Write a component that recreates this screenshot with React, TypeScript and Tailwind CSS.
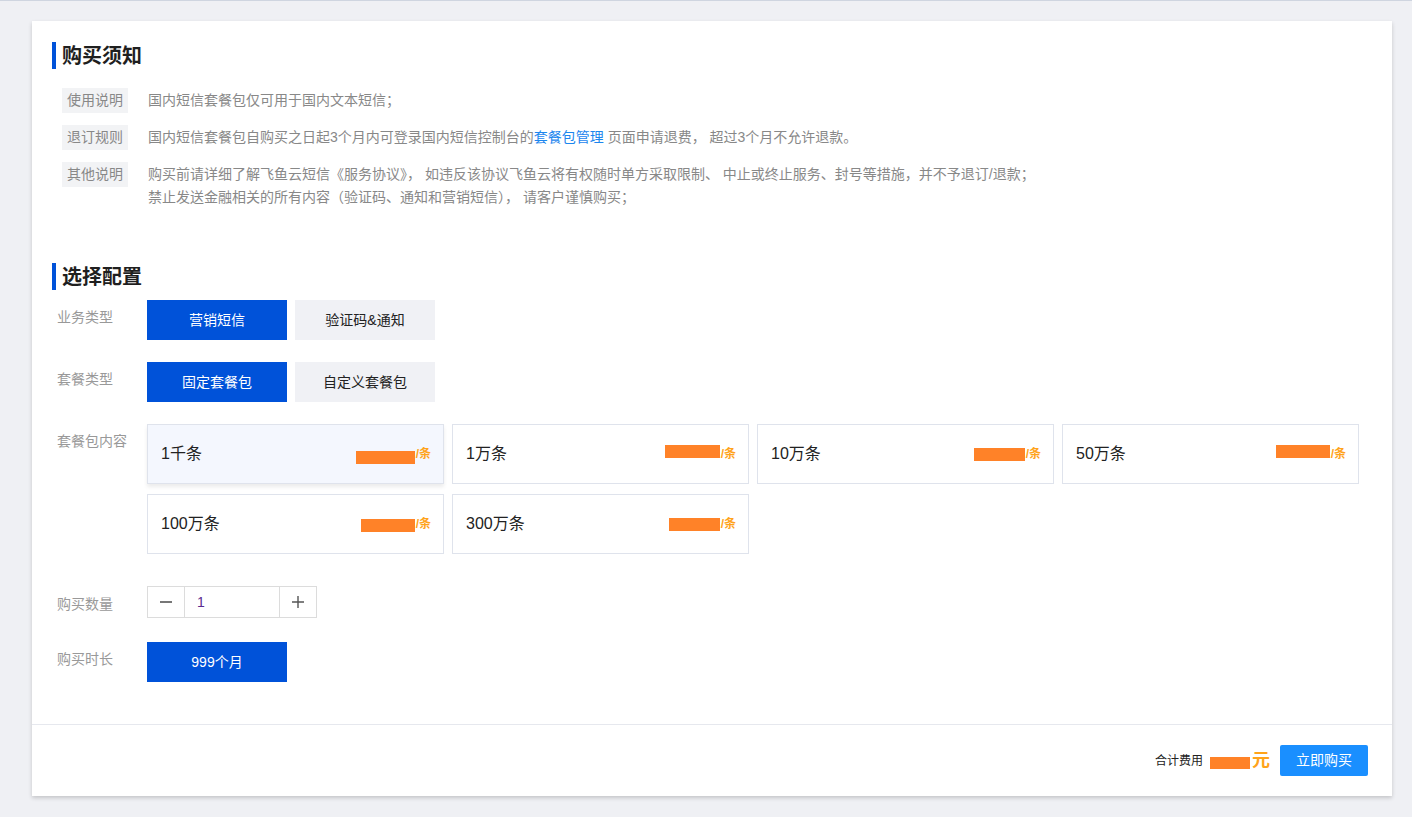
import { useState } from 'react';

const FONT = { fontFamily: '"Liberation Sans", "Noto Sans CJK SC", sans-serif' };

const notes = [
  { tag: '使用说明', lines: [<>国内短信套餐包仅可用于国内文本短信；</>] },
  {
    tag: '退订规则',
    lines: [
      <>
        国内短信套餐包自购买之日起3个月内可登录国内短信控制台的
        <span className="text-[#1c86ee]">套餐包管理</span> 页面申请退费， 超过3个月不允许退款。
      </>,
    ],
  },
  {
    tag: '其他说明',
    lines: [
      <>购买前请详细了解飞鱼云短信《服务协议》， 如违反该协议飞鱼云将有权随时单方采取限制、 中止或终止服务、封号等措施，并不予退订/退款；</>,
      <>禁止发送金融相关的所有内容（验证码、通知和营销短信）， 请客户谨慎购买；</>,
    ],
  },
];

// redacted prices: orange blocks of varying width / offset
const packages = [
  { name: '1千条', mask: 'w-[59px] mt-[6px]' },
  { name: '1万条', mask: 'w-[55px] -mt-[5px]' },
  { name: '10万条', mask: 'w-[51px] mt-[0px]' },
  { name: '50万条', mask: 'w-[54px] -mt-[5px]' },
  { name: '100万条', mask: 'w-[54px] mt-[2px]' },
  { name: '300万条', mask: 'w-[51px] mt-[0px]' },
];

function SectionTitle({ children }: { children: string }) {
  return (
    <div className="flex h-[27px] items-center border-l-4 border-[#0052d9] pl-[6px]">
      <span className="text-[20px] font-bold leading-none text-[#1f1f1f]">{children}</span>
    </div>
  );
}

function Option({ active, children, onClick }: { active?: boolean; children: string; onClick?: () => void }) {
  return (
    <button
      onClick={onClick}
      className={
        active
          ? 'h-[40px] w-[140px] bg-[#0052d9] text-[14px] text-white'
          : 'h-[40px] w-[140px] bg-[#f0f1f5] text-[14px] text-[#222]'
      }
    >
      {children}
    </button>
  );
}

function Row({ label, children, className = '' }: { label: string; children: React.ReactNode; className?: string }) {
  return (
    <div className={'flex items-start ' + className}>
      <div className="w-[90px] shrink-0 pt-[7px] text-[14px] leading-[20px] text-[#999]">{label}</div>
      <div>{children}</div>
    </div>
  );
}

export default function App() {
  const [biz, setBiz] = useState(0);
  const [kind, setKind] = useState(0);
  const [pkg, setPkg] = useState(0);
  const [qty, setQty] = useState(1);

  return (
    <div style={FONT} className="min-h-[817px] border-t border-[#cfd5e0] bg-[#eff0f4] pt-[20px]">
      <div className="ml-[32px] w-[1360px] bg-white shadow-[0_2px_4px_rgba(0,0,0,0.18)]">
        <div className="px-[20px] pt-[21px]">
          <SectionTitle>购买须知</SectionTitle>

          <div className="mt-[19px] ml-[10px] flex flex-col gap-[12px]">
            {notes.map((n) => (
              <div key={n.tag} className="flex items-start">
                <span className="h-[25px] shrink-0 bg-[#f2f3f5] px-[5px] text-[14px] leading-[25px] text-[#888]">
                  {n.tag}
                </span>
                <div className="ml-[20px] pt-[1px] text-[14px] leading-[23px] text-[#888]">
                  {n.lines.map((l, i) => (
                    <div key={i}>{l}</div>
                  ))}
                </div>
              </div>
            ))}
          </div>

          <div className="mt-[54px]">
            <SectionTitle>选择配置</SectionTitle>
          </div>

          <div className="ml-[5px] mt-[10px] flex flex-col">
            <Row label="业务类型">
              <div className="flex gap-[8px]">
                <Option active={biz === 0} onClick={() => setBiz(0)}>营销短信</Option>
                <Option active={biz === 1} onClick={() => setBiz(1)}>验证码&amp;通知</Option>
              </div>
            </Row>

            <Row label="套餐类型" className="mt-[22px]">
              <div className="flex gap-[8px]">
                <Option active={kind === 0} onClick={() => setKind(0)}>固定套餐包</Option>
                <Option active={kind === 1} onClick={() => setKind(1)}>自定义套餐包</Option>
              </div>
            </Row>

            <Row label="套餐包内容" className="mt-[22px]">
              <div className="grid w-[1212px] grid-cols-4 gap-x-[8px] gap-y-[10px]">
                {packages.map((p, i) => (
                  <div
                    key={p.name}
                    onClick={() => setPkg(i)}
                    className={
                      pkg === i
                        ? 'flex h-[60px] items-center justify-between border border-[#dfe3ec] bg-[#f4f7fe] pl-[13px] pr-[12px] shadow-[0_3px_4px_rgba(0,0,0,0.08)]'
                        : 'flex h-[60px] items-center justify-between border border-[#dfe3ec] bg-white pl-[13px] pr-[12px]'
                    }
                  >
                    <span className="text-[16px] text-[#222]">{p.name}</span>
                    <span className="flex items-center text-[12px] font-bold text-[#ffa31a]">
                      <span className={'h-[13px] bg-[#ff8228] ' + p.mask} />
                      <span className="ml-[1px]">/条</span>
                    </span>
                  </div>
                ))}
              </div>
            </Row>

            <Row label="购买数量" className="mt-[33px]">
              <div className="-mt-[1px] flex h-[32px] w-[170px] border border-[#dcdcdc]">
                <button
                  onClick={() => setQty(Math.max(1, qty - 1))}
                  className="flex w-[37px] items-center justify-center border-r border-[#dcdcdc]"
                >
                  <svg width="14" height="14" viewBox="0 0 14 14">
                    <path d="M1 7h12" stroke="#555" strokeWidth="1.6" />
                  </svg>
                </button>
                <div className="flex flex-1 items-center pl-[12px] text-[14px] text-[#5b2c8f]">{qty}</div>
                <button
                  onClick={() => setQty(qty + 1)}
                  className="flex w-[37px] items-center justify-center border-l border-[#dcdcdc]"
                >
                  <svg width="14" height="14" viewBox="0 0 14 14">
                    <path d="M1 7h12M7 1v12" stroke="#555" strokeWidth="1.4" />
                  </svg>
                </button>
              </div>
            </Row>

            <Row label="购买时长" className="mt-[24px]">
              <Option active>999个月</Option>
            </Row>
          </div>
        </div>

        <div className="mt-[42px] flex h-[72px] items-center justify-end border-t border-[#e6e8ee] pr-[24px]">
          <span className="text-[12px] text-[#222]">合计费用</span>
          <span className="ml-[7px] mt-[4px] h-[12px] w-[40px] bg-[#ff8228]" />
          <span className="ml-[2px] text-[18px] font-bold text-[#ffa31a]">元</span>
          <button className="ml-[10px] h-[31px] w-[88px] rounded-[2px] bg-[#1a8fff] text-[14px] text-white">
            立即购买
          </button>
        </div>
      </div>
    </div>
  );
}
